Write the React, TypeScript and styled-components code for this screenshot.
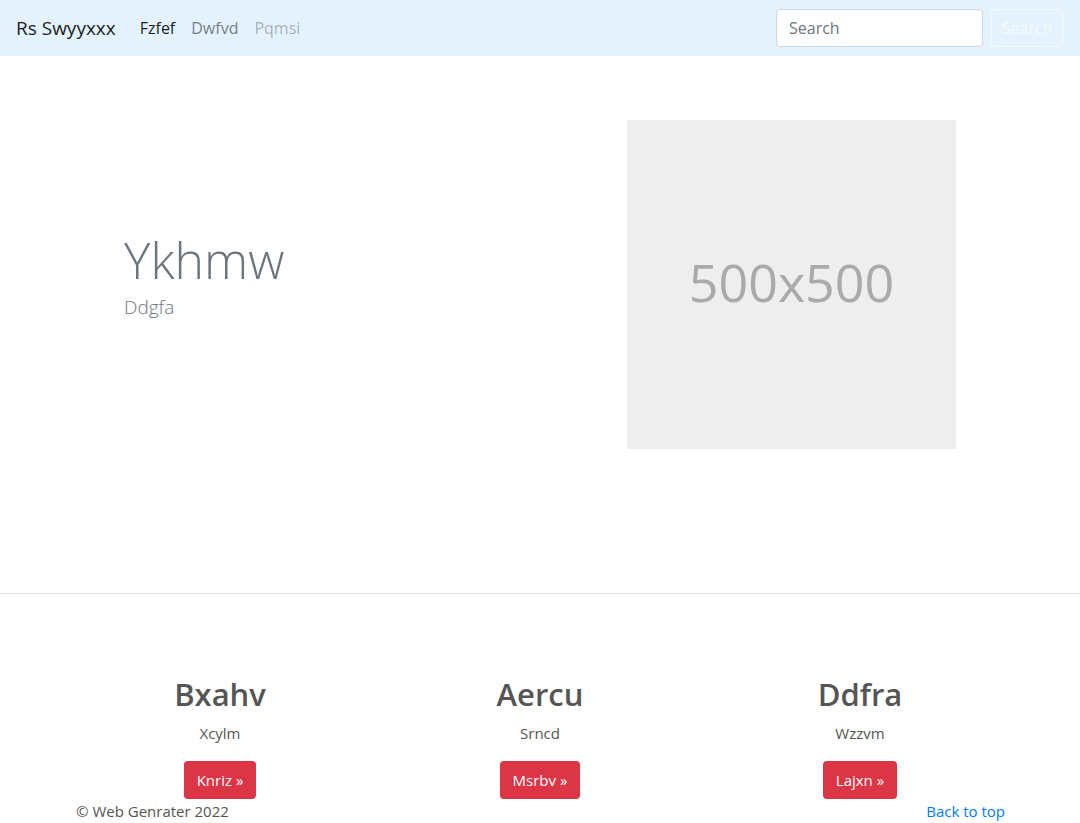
import React from "react";
import styled, { createGlobalStyle } from "styled-components";

const GlobalStyle = createGlobalStyle`
  * { box-sizing: border-box; }
  body {
    margin: 0;
    font-family: "Open Sans", "Noto Sans", sans-serif;
    font-size: 16px;
    line-height: 1.5;
    color: #212529;
    background: #fff;
    overflow: hidden;
  }
`;

const features = [
  { title: "Bxahv", text: "Xcylm", cta: "Knriz" },
  { title: "Aercu", text: "Srncd", cta: "Msrbv" },
  { title: "Ddfra", text: "Wzzvm", cta: "Lajxn" },
];

function App() {
  return (
    <>
      <GlobalStyle />
      <Navbar>
        <Brand href="#">Rs Swyyxxx</Brand>
        <NavList>
          <NavLink href="#" $state="active">Fzfef</NavLink>
          <NavLink href="#">Dwfvd</NavLink>
          <NavLink href="#" $state="disabled">Pqmsi</NavLink>
        </NavList>
        <SearchForm>
          <SearchInput type="search" placeholder="Search" />
          <OutlineButton type="button">Search</OutlineButton>
        </SearchForm>
      </Navbar>

      <Hero>
        <HeroText>
          <Display>Ykhmw</Display>
          <Lead>Ddgfa</Lead>
        </HeroText>
        <Placeholder>500x500</Placeholder>
      </Hero>

      <Marketing>
        {features.map((f) => (
          <Feature key={f.title}>
            <FeatureTitle>{f.title}</FeatureTitle>
            <FeatureText>{f.text}</FeatureText>
            <DangerButton href="#">{f.cta} &raquo;</DangerButton>
          </Feature>
        ))}
      </Marketing>

      <Footer>
        <span>&copy; Web Genrater 2022</span>
        <TopLink href="#">Back to top</TopLink>
      </Footer>
    </>
  );
}

export default App;

const Navbar = styled.nav`
  height: 56px;
  background: #e3f2fd;
  display: flex;
  align-items: center;
  padding: 0 17px 0 16px;
`;

const Brand = styled.a`
  font-size: 19px;
  line-height: 30px;
  color: rgba(0, 0, 0, 0.9);
  text-decoration: none;
  margin-right: 16px;
`;

const NavList = styled.div`
  display: flex;
  flex: 1;
`;

const NavLink = styled.a<{ $state?: "active" | "disabled" }>`
  padding: 8px;
  font-size: 16px;
  text-decoration: none;
  color: ${({ $state }) =>
    $state === "active"
      ? "rgba(0,0,0,0.9)"
      : $state === "disabled"
      ? "rgba(0,0,0,0.3)"
      : "rgba(0,0,0,0.5)"};
`;

const SearchForm = styled.form`
  display: flex;
  align-items: center;
  gap: 8px;
  margin: 0;
`;

const SearchInput = styled.input`
  width: 207px;
  height: 38px;
  padding: 6px 12px;
  font: inherit;
  font-size: 16px;
  color: #495057;
  background: #fff;
  border: 1px solid #ced4da;
  border-radius: 4px;
  outline: none;
  &::placeholder { color: #6c757d; }
`;

const OutlineButton = styled.button`
  width: 72px;
  height: 38px;
  padding: 6px 0;
  font: inherit;
  font-size: 16px;
  color: #f8f9fa;
  background: transparent;
  border: 1px solid #f8f9fa;
  border-radius: 4px;
`;

const Hero = styled.section`
  display: flex;
  align-items: center;
  justify-content: space-between;
  height: 538px;
  padding: 64px 124px 144px;
  border-bottom: 1px solid #e5e5e5;
`;

const HeroText = styled.div`
  padding-bottom: 16px;
`;

const Display = styled.h1`
  margin: 0 0 6px;
  font-size: 50px;
  font-weight: 300;
  line-height: 1.1;
  color: #6c757d;
`;

const Lead = styled.p`
  margin: 0;
  font-size: 19px;
  font-weight: 300;
  line-height: 1.4;
  color: #6c757d;
`;

const Placeholder = styled.div`
  width: 329px;
  height: 329px;
  padding-bottom: 6px;
  background: #eee;
  color: #aaa;
  display: flex;
  align-items: center;
  justify-content: center;
  font-size: 52px;
`;

const Marketing = styled.section`
  width: 960px;
  margin: 0 auto;
  padding-top: 82px;
  display: grid;
  grid-template-columns: repeat(3, 1fr);
`;

const Feature = styled.div`
  display: flex;
  flex-direction: column;
  align-items: center;
  text-align: center;
`;

const FeatureTitle = styled.h2`
  margin: 0 0 8px;
  font-size: 31px;
  font-weight: 600;
  line-height: 1.2;
  color: #555;
`;

const FeatureText = styled.p`
  margin: 0 0 16px;
  font-size: 15px;
  line-height: 24px;
  color: #555;
`;

const DangerButton = styled.a`
  display: inline-block;
  height: 38px;
  padding: 7px 13px;
  font-size: 15px;
  line-height: 24px;
  color: #fff;
  background: #dc3545;
  border-radius: 4px;
  text-decoration: none;
`;

const Footer = styled.footer`
  width: 960px;
  margin: 0 auto;
  padding: 0 15px 0 16px;
  display: flex;
  justify-content: space-between;
  font-size: 15px;
  line-height: 24px;
  color: #555;
`;

const TopLink = styled.a`
  color: #007bff;
  text-decoration: none;
`;
